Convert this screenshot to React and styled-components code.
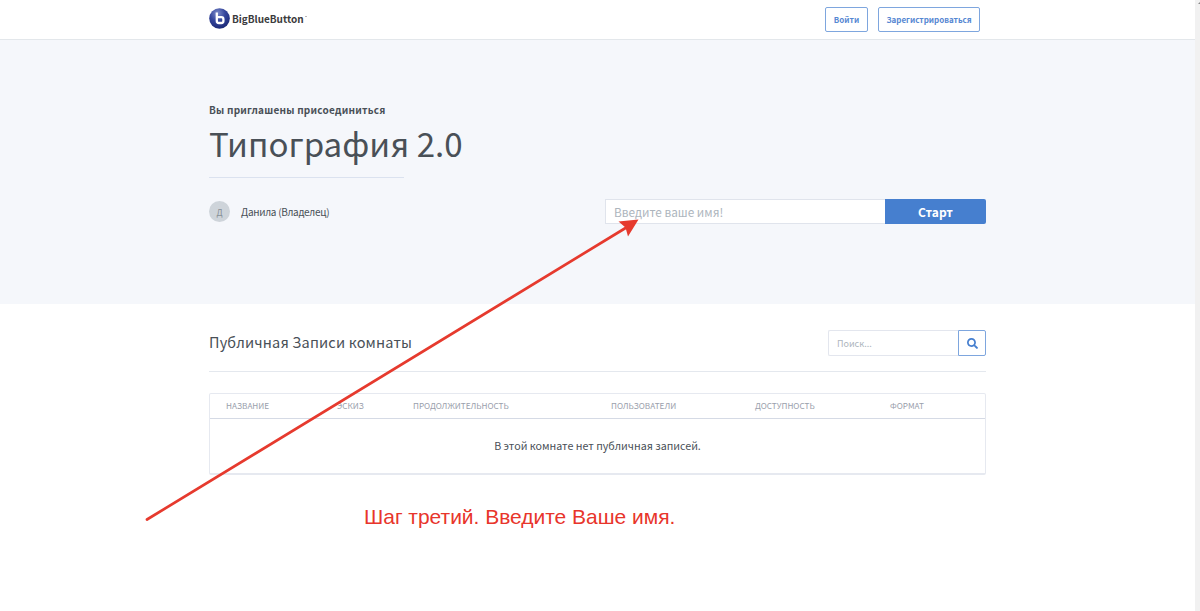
import React from 'react';
import styled, { createGlobalStyle } from 'styled-components';
import { FaSearch } from 'react-icons/fa';

const GlobalStyle = createGlobalStyle`
  * {
    box-sizing: border-box;
  }
  body {
    margin: 0;
    background: #fff;
    color: #495057;
    font-family: "Noto Sans CJK SC", "Noto Sans", sans-serif;
    overflow: hidden;
  }
  input, button {
    font-family: inherit;
    margin: 0;
    outline: none;
  }
`;

const Screen = styled.div`
  position: relative;
  display: flex;
  width: 1200px;
  height: 611px;
`;

const Page = styled.div`
  flex: 1;
  min-width: 0;
`;

const ScrollTrack = styled.div`
  width: 5px;
  background: #f1f1f1;
  display: flex;
  justify-content: flex-end;
  padding-top: 2px;
`;

const ScrollArrow = styled.div`
  width: 0;
  height: 0;
  border-left: 2px solid transparent;
  border-bottom: 2px solid #8a8a8a;
`;

const Container = styled.div`
  width: 777px;
  margin-left: 209px;
`;

const Header = styled.header`
  height: 40px;
  border-bottom: 1px solid #e3e7eb;
`;

const HeaderRow = styled(Container)`
  display: flex;
  align-items: center;
  height: 39px;
  padding-right: 6px;
`;

const Brand = styled.div`
  display: flex;
  align-items: center;
  gap: 2px;
  margin-right: auto;
  padding-bottom: 3px;
  color: #3b3b3d;
`;

const BrandName = styled.span`
  font-size: 10px;
  font-weight: 700;
  line-height: 20px;
  letter-spacing: -0.02px;
  padding-top: 1px;
`;

const Trademark = styled.span`
  width: 2px;
  height: 1px;
  margin: -3px 0 0 -1px;
  background: #b9b9bb;
`;

const OutlineButton = styled.button`
  width: ${(p) => p.$width}px;
  height: 25px;
  margin-left: ${(p) => p.$gap || 0}px;
  padding: 0;
  border: 1px solid #7ea6de;
  border-radius: 2px;
  background: #fff;
  color: #5687d2;
  font-size: 8px;
  font-weight: 700;
  line-height: 23px;
`;

const Hero = styled.section`
  height: 264px;
  padding-top: 62px;
  background: #f5f7fb;
`;

const Invite = styled.div`
  height: 16px;
  font-size: 10px;
  font-weight: 700;
  line-height: 16px;
  letter-spacing: 0.23px;
`;

const RoomTitle = styled.h1`
  width: 300px;
  height: 50px;
  margin: 0;
  font-size: 33.1px;
  font-weight: 400;
  line-height: 50px;
  white-space: nowrap;
`;

const TitleRule = styled.div`
  width: 195px;
  height: 1px;
  margin-top: 9px;
  background: #dbe2ef;
`;

const JoinRow = styled.div`
  display: flex;
  align-items: center;
  height: 25px;
  margin-top: 21px;
`;

const Avatar = styled.span`
  width: 21px;
  height: 21px;
  border-radius: 50%;
  background: #ced4da;
  color: #868e96;
  font-size: 8.5px;
  line-height: 22px;
  text-align: center;
`;

const Owner = styled.span`
  margin-left: 11px;
  padding-top: 1px;
  font-size: 10px;
  line-height: 20px;
  letter-spacing: -0.3px;
`;

const JoinForm = styled.div`
  display: flex;
  margin-left: auto;
`;

const NameInput = styled.input`
  width: 280px;
  height: 25px;
  padding: 0 8px;
  border: 1px solid #e0e4ec;
  border-right: 0;
  background: #fff;
  font-size: 11.8px;
  &::placeholder {
    color: #adb5bd;
    opacity: 1;
  }
`;

const StartButton = styled.button`
  width: 101px;
  height: 25px;
  padding: 0;
  border: 0;
  border-radius: 0 2px 2px 0;
  background: #467fcf;
  color: #fff;
  font-size: 12px;
  font-weight: 700;
  line-height: 25px;
`;

const Recordings = styled(Container)`
  padding-top: 26px;
`;

const RecordingsHeader = styled.div`
  display: flex;
  align-items: center;
  justify-content: space-between;
  height: 42px;
  padding-bottom: 16px;
  border-bottom: 1px solid #e4e8ee;
`;

const SectionTitle = styled.h2`
  margin: 0;
  padding-bottom: 2px;
  font-size: 14.5px;
  font-weight: 400;
  line-height: 24px;
  letter-spacing: 0.18px;
`;

const Search = styled.div`
  display: flex;
`;

const SearchInput = styled.input`
  width: 130px;
  height: 26px;
  padding: 1px 8px 0;
  border: 1px solid #e3e6ee;
  border-right: 0;
  border-radius: 2px 0 0 2px;
  font-size: 9px;
  &::placeholder {
    color: #adb5bd;
    opacity: 1;
  }
`;

const SearchButton = styled.button`
  display: flex;
  align-items: center;
  justify-content: center;
  width: 28px;
  height: 26px;
  padding: 1px 0 0;
  border: 1px solid #7ea6de;
  border-radius: 0 2px 2px 0;
  background: #fff;
  color: #467fcf;
`;

const Table = styled.div`
  height: 82px;
  margin-top: 21px;
  border: 1px solid #e6e9f0;
  border-bottom-width: 2px;
  border-radius: 2px;
`;

const HeadRow = styled.div`
  display: grid;
  grid-template-columns: 111px 76px 198px 144px 135px 1fr;
  height: 25px;
  padding-left: 16px;
  border-bottom: 1px solid #d5dae5;
`;

const HeadCell = styled.div`
  color: #9aa0ac;
  font-size: 8.2px;
  line-height: 22px;
  white-space: nowrap;
`;

const EmptyRow = styled.div`
  font-size: 10.7px;
  line-height: 54px;
  text-align: center;
`;

const Note = styled.div`
  position: absolute;
  left: 364px;
  top: 504px;
  color: #e8352b;
  font: 21px/26px "Liberation Sans", sans-serif;
  letter-spacing: -0.02px;
  white-space: nowrap;
`;

const Arrow = styled.svg`
  position: absolute;
  left: 0;
  top: 0;
  pointer-events: none;
`;

const columns = ['Название', 'Эскиз', 'Продолжительность', 'Пользователи', 'Доступность', 'Формат'];

const Logo = () => (
  <svg width="21" height="21" viewBox="0 0 21 21">
    <defs>
      <radialGradient id="ball" cx="0.4" cy="0.25" r="0.75">
        <stop offset="0" stopColor="#7d8cc9" />
        <stop offset="0.5" stopColor="#35469c" />
        <stop offset="1" stopColor="#1c2a78" />
      </radialGradient>
    </defs>
    <circle cx="10.5" cy="10.5" r="10.3" fill="url(#ball)" />
    <path d="M7.8 4.5V13q0 2 2 2h2.6q2 0 2-2v-1.8q0-2-2-2H7.8" fill="none" stroke="#fff" strokeWidth="2.3" />
  </svg>
);

const App = () => {
  return (
    <Screen>
      <GlobalStyle />
      <Page>
        <Header>
          <HeaderRow>
            <Brand>
              <Logo />
              <BrandName>BigBlueButton</BrandName>
              <Trademark />
            </Brand>
            <OutlineButton $width={43}>Войти</OutlineButton>
            <OutlineButton $width={102} $gap={10}>Зарегистрироваться</OutlineButton>
          </HeaderRow>
        </Header>
        <Hero>
          <Container>
            <Invite>Вы приглашены присоединиться</Invite>
            <RoomTitle>Типография 2.0</RoomTitle>
            <TitleRule />
            <JoinRow>
              <Avatar>Д</Avatar>
              <Owner>Данила (Владелец)</Owner>
              <JoinForm>
                <NameInput placeholder="Введите ваше имя!" />
                <StartButton>Старт</StartButton>
              </JoinForm>
            </JoinRow>
          </Container>
        </Hero>
        <Recordings>
          <RecordingsHeader>
            <SectionTitle>Публичная Записи комнаты</SectionTitle>
            <Search>
              <SearchInput placeholder="Поиск..." />
              <SearchButton>
                <FaSearch size={11} />
              </SearchButton>
            </Search>
          </RecordingsHeader>
          <Table>
            <HeadRow>
              {columns.map((name) => (
                <HeadCell key={name}>{name.toUpperCase()}</HeadCell>
              ))}
            </HeadRow>
            <EmptyRow>В этой комнате нет публичная записей.</EmptyRow>
          </Table>
        </Recordings>
      </Page>
      <ScrollTrack>
        <ScrollArrow />
      </ScrollTrack>
      <Note>Шаг третий. Введите Ваше имя.</Note>
      <Arrow width="1200" height="611">
        <path d="M147 519.5L628 226.5" stroke="#e63a2e" strokeWidth="2.7" strokeLinecap="round" />
        <path d="M638.500 219.5L618.5 221.5L625.5 227.5L628 236.5Z" fill="#e63a2e" />
      </Arrow>
    </Screen>
  );
};

export default App;
